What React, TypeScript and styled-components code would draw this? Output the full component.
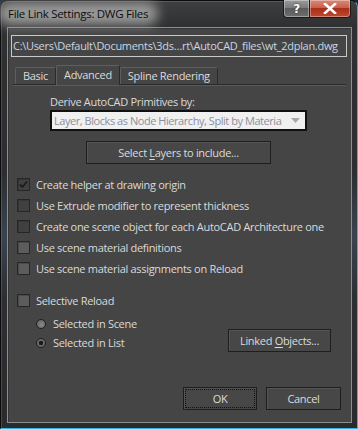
import styled, { createGlobalStyle } from "styled-components";

const GlobalStyle = createGlobalStyle`
  html, body {
    margin: 0;
    padding: 0;
    background: #1b2530;
  }
  body {
    font-family: "Open Sans", "Noto Sans", sans-serif;
    font-size: 11px;
    letter-spacing: -0.3px;
    color: #dadada;
  }
`;

const checkRows = [
  { label: "Create helper at drawing origin", checked: true, filled: false },
  { label: "Use Extrude modifier to represent thickness", checked: false, filled: false },
  { label: "Create one scene object for each AutoCAD Architecture one", checked: false, filled: false },
  { label: "Use scene material definitions", checked: false, filled: true },
  { label: "Use scene material assignments on Reload", checked: false, filled: true },
];

const tabs = [
  { title: "Basic", active: false },
  { title: "Advanced", active: true },
  { title: "Spline Rendering", active: false },
];

export default function App() {
  return (
    <>
      <GlobalStyle />
      <Window>
        <TitleBar>
          <Title>File Link Settings: DWG Files</Title>
          <CaptionButtons>
            <HelpButton>?</HelpButton>
            <CloseButton>
              <svg width="14" height="11" viewBox="0 0 14 11">
                <path d="M2 1 L12 10 M12 1 L2 10" stroke="#fff" strokeWidth="2.6" strokeLinecap="square" />
              </svg>
            </CloseButton>
          </CaptionButtons>
        </TitleBar>
        <Client>
          <PathField>C:\Users\Default\Documents\3ds…rt\AutoCAD_files\wt_2dplan.dwg</PathField>
          <TabStrip>
            {tabs.map((tab) => (
              <Tab key={tab.title} active={tab.active}>
                {tab.title}
              </Tab>
            ))}
          </TabStrip>
          <DeriveLabel>Derive AutoCAD Primitives by:</DeriveLabel>
          <Dropdown>
            <DropdownText>Layer, Blocks as Node Hierarchy, Split by Materia</DropdownText>
            <svg width="9" height="5" viewBox="0 0 9 5">
              <path d="M0 0 H9 L4.5 5 Z" fill="#a8a8a8" />
            </svg>
          </Dropdown>
          <Button width={185} style={{ marginLeft: 78, marginTop: 10 }}>
            <span>
              Select <u>L</u>ayers to include...
            </span>
          </Button>
          <CheckList>
            {checkRows.map((row) => (
              <CheckRow key={row.label}>
                <CheckBox filled={row.filled}>
                  {row.checked && (
                    <svg width="9" height="9" viewBox="0 0 9 9">
                      <path d="M1 4.5 L3.5 7 L8 1.5" fill="none" stroke="#1c1c1c" strokeWidth="1.8" />
                    </svg>
                  )}
                </CheckBox>
                <span>{row.label}</span>
              </CheckRow>
            ))}
          </CheckList>
          <CheckRow style={{ marginTop: 11 }}>
            <CheckBox filled />
            <span>Selective Reload</span>
          </CheckRow>
          <ReloadRow>
            <RadioColumn>
              <RadioRow>
                <Radio />
                <span>Selected in Scene</span>
              </RadioRow>
              <RadioRow>
                <Radio selected />
                <span>Selected in List</span>
              </RadioRow>
            </RadioColumn>
            <Button width={103}>
              <span>
                Linked <u>O</u>bjects...
              </span>
            </Button>
          </ReloadRow>
          <Footer>
            <Button width={74} focused>
              OK
            </Button>
            <Button width={75}>Cancel</Button>
          </Footer>
        </Client>
      </Window>
    </>
  );
}

const Window = styled.div`
  width: 358px;
  height: 429px;
  box-sizing: border-box;
  display: flex;
  flex-direction: column;
  border: 1px solid #0b0b0b;
  border-right-color: #39b4e6;
  border-bottom-color: #39b4e6;
  border-radius: 7px 7px 0 0;
  background: linear-gradient(
    180deg,
    #3e3f41 0%,
    #2f3032 6%,
    #2c2e31 40%,
    #3a4450 55%,
    #2c2e31 70%,
    #2a2b2d 100%
  );
  box-shadow: inset 1px 1px 0 rgba(255, 255, 255, 0.14);
`;

const TitleBar = styled.div`
  height: 26px;
  display: flex;
  align-items: flex-start;
  padding-left: 7px;
`;

const Title = styled.span`
  position: relative;
  isolation: isolate;
  margin-top: 5px;
  font-size: 11.5px;
  line-height: 15px;
  color: #0c0c0c;

  &::before {
    content: "";
    position: absolute;
    inset: -4px -10px -4px -10px;
    border-radius: 14px;
    background: rgba(170, 170, 170, 0.85);
    filter: blur(6px);
    z-index: -1;
  }
`;

const CaptionButtons = styled.div`
  display: flex;
  margin: -1px 6px 0 auto;
`;

const CaptionButton = styled.div`
  height: 18px;
  box-sizing: border-box;
  display: flex;
  align-items: center;
  justify-content: center;
  border: 1px solid #1a1a1a;
  border-top: none;
  box-shadow: inset 0 0 0 1px rgba(255, 255, 255, 0.35);
`;

const HelpButton = styled(CaptionButton)`
  width: 26px;
  border-radius: 0 0 0 4px;
  border-right: none;
  background: linear-gradient(180deg, #9a9a9a 0%, #7c7c7c 45%, #5c5c5c 50%, #6e6e6e 100%);
  color: #fff;
  font-family: "DejaVu Sans", sans-serif;
  font-weight: bold;
  font-size: 12px;
  text-shadow: 0 0 2px #222;
`;

const CloseButton = styled(CaptionButton)`
  width: 42px;
  border-radius: 0 0 4px 0;
  background: linear-gradient(180deg, #d88a78 0%, #c8604a 45%, #a8301a 50%, #c04830 100%);
`;

const Client = styled.div`
  flex: 1;
  margin: 0 5px 5px 6px;
  border: 1px solid #8e8e8e;
  background: #454545;
  display: flex;
  flex-direction: column;
  box-shadow: inset 1px 1px 0 #353535;
`;

const PathField = styled.div`
  margin: 7px 4px 0 3px;
  height: 22px;
  box-sizing: border-box;
  border: 1px solid #c9c9c9;
  padding-left: 1px;
  line-height: 20px;
  color: #c9d5e2;
  white-space: nowrap;
  overflow: hidden;
`;

const TabStrip = styled.div`
  margin: 8px 5px 0 5px;
  height: 19px;
  padding-left: 2px;
  display: flex;
  align-items: flex-end;
  border-bottom: 1px solid #2a2a2a;
  box-shadow: 0 1px 0 #5a5a5a;
`;

const Tab = styled.div<{ active?: boolean }>`
  height: ${(p) => (p.active ? 20 : 17)}px;
  box-sizing: border-box;
  padding: 0 7px;
  margin-bottom: ${(p) => (p.active ? -1 : 0)}px;
  line-height: ${(p) => (p.active ? 17 : 15)}px;
  border: 1px solid #2a2a2a;
  border-bottom: none;
  border-left-color: #5e5e5e;
  border-top-color: #5e5e5e;
  border-radius: 2px 2px 0 0;
  background: #454545;
  color: #dadada;
  z-index: ${(p) => (p.active ? 1 : 0)};
`;

const DeriveLabel = styled.div`
  margin: 9px 0 0 42px;
  line-height: 16px;
`;

const Dropdown = styled.div`
  margin-left: 42px;
  width: 257px;
  height: 21px;
  box-sizing: border-box;
  border: 2px solid #111;
  background: #f0f0f0;
  display: flex;
  align-items: center;
  gap: 4px;
  padding: 0 5px 0 2px;

  svg {
    flex-shrink: 0;
  }
`;

const DropdownText = styled.span`
  flex: 1;
  color: #8e8e9c;
  letter-spacing: -0.45px;
  white-space: nowrap;
  overflow: hidden;
`;

const Button = styled.div<{ width: number; focused?: boolean }>`
  width: ${(p) => p.width}px;
  height: 23px;
  box-sizing: border-box;
  border: 1px solid #1e1e1e;
  background: #474747;
  box-shadow: inset 1px 1px 0 #555;
  display: flex;
  align-items: center;
  justify-content: center;
  color: #dcdcdc;
  white-space: nowrap;
  outline: ${(p) => (p.focused ? "1px dotted #111" : "none")};
  outline-offset: -3px;

  u {
    text-decoration-thickness: 1px;
    text-underline-offset: 2px;
  }
`;

const CheckList = styled.div`
  margin-top: 10px;
  display: flex;
  flex-direction: column;
`;

const CheckRow = styled.div`
  height: 21px;
  display: flex;
  align-items: center;
  gap: 6px;
  padding-left: 9px;
`;

const CheckBox = styled.div<{ filled?: boolean }>`
  width: 13px;
  height: 13px;
  box-sizing: border-box;
  border: 1px solid #262626;
  background: ${(p) => (p.filled ? "#5c5c5c" : "#404040")};
  box-shadow: inset 1px 1px 0 ${(p) => (p.filled ? "#4a4a4a" : "#363636")};
  display: flex;
  align-items: center;
  justify-content: center;
`;

const ReloadRow = styled.div`
  margin: 3px 20px 0 0;
  display: flex;
  align-items: flex-end;
  justify-content: space-between;
`;

const RadioColumn = styled.div`
  display: flex;
  flex-direction: column;
  padding-left: 28px;
`;

const RadioRow = styled.div`
  height: 19px;
  display: flex;
  align-items: center;
  gap: 7px;
`;

const Radio = styled.div<{ selected?: boolean }>`
  width: 10px;
  height: 10px;
  box-sizing: border-box;
  border-radius: 50%;
  border: 1px solid #202020;
  background: ${(p) =>
    p.selected
      ? "radial-gradient(circle, #1a1a1a 0 2px, #6a6a6a 2.5px)"
      : "radial-gradient(circle at 60% 60%, #8a8a8a, #5a5a5a)"};
`;

const Footer = styled.div`
  margin-top: auto;
  display: flex;
  justify-content: flex-end;
  gap: 9px;
  padding: 0 10px 12px 0;
`;
